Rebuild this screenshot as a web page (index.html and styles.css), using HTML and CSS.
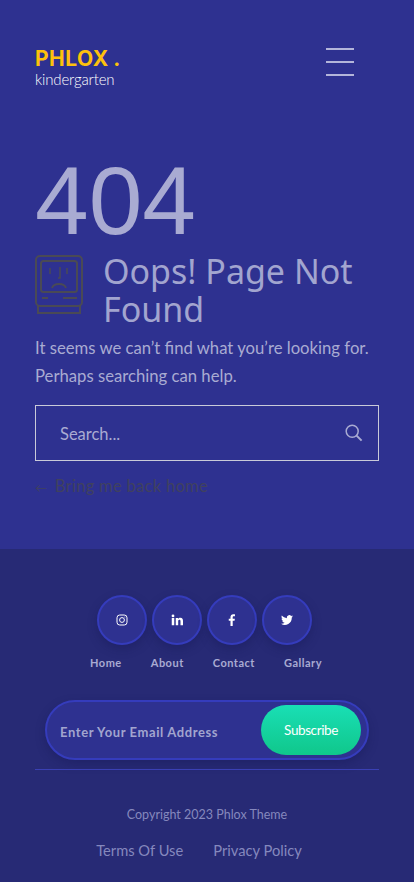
FILE: index.html
```html
<!DOCTYPE html>
<html lang="en">
<head>
<meta charset="utf-8">
<title>404 - Phlox Kindergarten</title>
<link rel="stylesheet" href="styles.css">
</head>
<body>
<div class="page">
  <header class="topbar">
    <a class="logo" href="#">
      <span class="logo-main">PHLOX .</span>
      <span class="logo-sub">kindergarten</span>
    </a>
    <button class="burger" aria-label="Menu"><span></span><span></span><span></span></button>
  </header>
  <main class="content">
    <div class="code">404</div>
    <div class="title-row">
      <svg class="mac" viewBox="0 0 48 60" fill="none" stroke="#4a4a55" stroke-width="2">
        <rect x="1" y="1" width="46" height="50" rx="4"/>
        <rect x="6" y="6" width="36" height="31" rx="2.5"/>
        <path d="M15 13v6M32 13v6" stroke-width="1.500"/>
        <path d="M25 12v11h-2" stroke-width="1.500"/>
        <path d="M17 33c1-3 3-4 7-4s6 1 7 4"/>
        <path d="M7 43h6M28 43h14"/>
        <path d="M3 51v7h42v-7"/>
      </svg>
      <h1 class="title">Oops! Page Not Found</h1>
    </div>
    <p class="lead">It seems we can’t find what you’re looking for. Perhaps searching can help.</p>
    <form class="search">
      <span class="search-text">Search...</span>
      <svg class="search-icon" viewBox="0 0 18 18" fill="none" stroke="#a9abd2" stroke-width="1.5">
        <circle cx="7.200" cy="7.200" r="6"/>
        <path d="M11.600 11.600l5 5" stroke-width="2"/>
      </svg>
    </form>
    <a class="back" href="#"><span class="arrow">←</span> Bring me back home</a>
  </main>
  <footer class="footer">
    <div class="socials">
      <a class="social" href="#"><svg class="ic" viewBox="0 0 24 24" fill="none" stroke="#fff" stroke-width="2"><rect x="2" y="2" width="20" height="20" rx="5.500"/><circle cx="12" cy="12" r="4.800"/><circle cx="17.800" cy="6.200" r="1" fill="#fff" stroke="none"/></svg></a>
      <a class="social" href="#"><svg class="ic" viewBox="0 0 24 24" fill="#fff"><rect x="1.500" y="8" width="5" height="14.500"/><circle cx="4" cy="3.800" r="2.800"/><path d="M9.500 8h4.700v2.100c.8-1.400 2.500-2.500 4.600-2.500 4 0 5.200 2.600 5.200 6.600v8.300h-5v-7.400c0-2-.4-3.400-2.200-3.400-2.100 0-2.400 1.600-2.400 3.400v7.400h-4.900z"/></svg></a>
      <a class="social" href="#"><svg class="ic" viewBox="0 0 24 24" fill="#fff"><path d="M9 24V13.500H5.500V9.300H9V6.200C9 2.400 11.200.3 14.500.3c1.600 0 3 .1 3.400.2v3.800h-2.300c-1.800 0-2.200.9-2.200 2.100v2.900h4.300l-.6 4.200h-3.700V24z"/></svg></a>
      <a class="social" href="#"><svg class="ic" viewBox="0 0 24 24" fill="#fff"><path d="M24 4.600c-.9.4-1.800.7-2.800.8 1-.6 1.800-1.600 2.200-2.700-1 .6-2 1-3.100 1.200A4.900 4.900 0 0 0 11.900 8.400C7.800 8.200 4.200 6.200 1.700 3.200c-1.300 2.200-.6 5.100 1.500 6.500-.8 0-1.500-.2-2.200-.6 0 2.300 1.600 4.400 3.900 4.900-.7.200-1.500.2-2.200.1.600 2 2.400 3.400 4.600 3.400A9.900 9.900 0 0 1 0 19.500 13.900 13.900 0 0 0 21.500 7.100c1-.7 1.800-1.500 2.500-2.500z"/></svg></a>
    </div>
    <nav class="foot-nav">
      <a href="#">Home</a><a href="#">About</a><a href="#">Contact</a><a href="#">Gallary</a>
    </nav>
    <form class="subscribe">
      <span class="sub-text">Enter Your Email Address</span>
      <button class="sub-btn" type="button">Subscribe</button>
    </form>
    <hr class="rule">
    <p class="copy">Copyright 2023 Phlox Theme</p>
    <div class="legal"><a href="#">Terms Of Use</a><a href="#">Privacy Policy</a></div>
  </footer>
</div>
</body>
</html>
```
FILE: styles.css
```css
* { box-sizing: border-box; }
html, body { margin: 0; padding: 0; }
body { background: #2e3190; font-family: "Lato", "Noto Sans", sans-serif; }
a { text-decoration: none; color: inherit; }
.page { width: 414px; height: 882px; overflow: hidden; display: flex; flex-direction: column; }

.topbar { height: 155px; padding: 47px 60px 0 35px; display: flex; justify-content: space-between; align-items: flex-start; }
.logo { display: flex; flex-direction: column; }
.logo-main { font-family: "Inter", sans-serif; font-weight: 700; font-size: 21px; line-height: 23px; color: #fdc10d; letter-spacing: 0.5px; word-spacing: -1px; }
.logo-sub { font-family: "Lato", sans-serif; font-weight: 300; font-size: 15px; line-height: 18px; color: #fff; letter-spacing: -0.15px; }
.burger { width: 28px; height: 28px; padding: 0; margin: 1px 0 0; border: 0; background: none; display: flex; flex-direction: column; justify-content: space-between; }
.burger span { display: block; height: 2px; background: #b3b5da; }

.content { height: 394px; padding: 0 35px; color: #a9abd2; }
.code { font-family: "Liberation Sans", sans-serif; font-size: 96.500px; line-height: 92px; color: #a9abd2; }
.title-row { display: flex; gap: 20px; margin-top: 5px; }
.mac { width: 48px; height: 60px; flex: none; margin-top: 3px; }
.title { margin: 0; font-family: "Noto Sans", sans-serif; font-weight: 400; font-size: 34px; line-height: 38px; color: #a2a5cf; }
.lead { margin: 6px 0 0; font-family: "Lato", sans-serif; font-weight: 400; font-size: 16.700px; line-height: 28px; color: #a9abd2; }
.search { margin-top: 15px; height: 56px; border: 1px solid #c9cad9; padding: 0 15px 0 24px; display: flex; align-items: center; justify-content: space-between; }
.search-text { font-size: 16.500px; font-weight: 400; color: #a9abd2; margin-top: 2px; }
.search-icon { width: 18px; height: 18px; margin-bottom: 1px; }
.back { display: block; margin-top: 14px; font-size: 16.500px; line-height: 22px; font-weight: 400; letter-spacing: 0.3px; color: #40415f; }
.arrow { font-size: 12px; margin-right: 3px; }

.footer { flex: 1; background: #272a75; padding: 46px 35px 0; }
.socials { display: flex; justify-content: center; gap: 5px; padding-right: 5px; }
.social { width: 50px; height: 50px; border-radius: 50%; background: #2e3190; border: 2px solid #353cbc; box-shadow: 0 4px 10px rgba(20, 22, 80, 0.35); display: flex; align-items: center; justify-content: center; }
.ic { width: 12px; height: 12px; }
.foot-nav { display: flex; justify-content: center; gap: 29px; margin-top: 11px; font-size: 11px; line-height: 14px; font-weight: 700; letter-spacing: 0.5px; color: #a9abd2; padding-right: 2px; }
.subscribe { margin: 30px 10px 0; height: 60px; border-radius: 30px; background: #2e3190; border: 2px solid #353cbc; box-shadow: 0 4px 10px rgba(20, 22, 80, 0.35); display: flex; align-items: center; justify-content: space-between; padding: 0 6px 0 13px; }
.sub-text { font-size: 13px; font-weight: 700; letter-spacing: 0.6px; color: #a2a5cf; margin-top: 3px; }
.sub-btn { width: 100px; height: 50px; border: 0; padding: 0; border-radius: 25px; background: linear-gradient(#19dfb5, #10c78b); color: #fff; font-family: "Lato", sans-serif; font-size: 13.500px; font-weight: 400; letter-spacing: -0.4px; }
.rule { margin: 9px 0 0; border: 0; height: 1px; background: #3a40b4; }
.copy { margin: 37px 0 0; text-align: center; font-size: 12.500px; line-height: 16px; font-weight: 400; color: #8588bd; }
.legal { margin-top: 17px; display: flex; justify-content: center; gap: 30px; font-size: 14.700px; line-height: 20px; font-weight: 400; color: #8588bd; padding-right: 16px; }
```
